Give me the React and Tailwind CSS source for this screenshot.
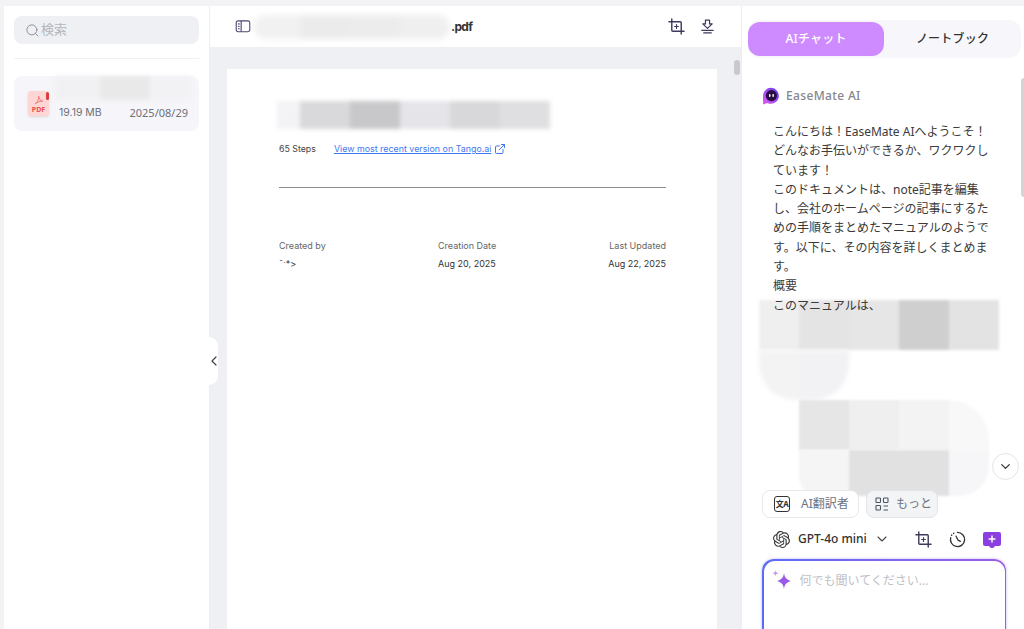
import { ChevronDown, ChevronLeft, Search, ExternalLink, Plus } from 'lucide-react';
import { SiOpenai } from 'react-icons/si';

const ui = { fontFamily: '"Noto Sans", "Noto Sans CJK JP", sans-serif' };
const doc = { fontFamily: 'Inter, "Liberation Sans", sans-serif' };

// pixelated, blurred-out patches over private text
const Mosaic = ({ className, cols, cells }) => (
  <div className={'absolute grid overflow-hidden ' + className} style={{ gridTemplateColumns: cols }}>
    {cells.map((c, i) => (
      <div key={i} className="h-full" style={{ background: c }} />
    ))}
  </div>
);

const CropIcon = ({ className }) => (
  <svg viewBox="0 0 18 18" fill="none" stroke="#3d3a5c" strokeWidth="1.5" strokeLinecap="round" className={className}>
    <path d="M1 4H13a1 1 0 0 1 1 1v12" />
    <path d="M4 1V13a1 1 0 0 0 1 1h12" />
    <path d="M9 7v4M7 9h4" strokeWidth="1.2" />
  </svg>
);

const PanelIcon = () => (
  <svg viewBox="0 0 16 14" fill="none" stroke="#4b4770" strokeWidth="1.2" className="w-4 h-[13px]">
    <rect x="0.7" y="1" width="14.6" height="11.6" rx="2" />
    <path d="M6 1v11.6" />
    <path d="M3 4.2h1M3 6.8h1M3 9.4h1" strokeLinecap="round" />
  </svg>
);

const DownloadIcon = () => (
  <svg viewBox="0 0 16 16" fill="none" stroke="#3d3a5c" strokeWidth="1.3" strokeLinecap="round" strokeLinejoin="round" className="w-[15px] h-[15px]">
    <path d="M5.8 1.2h4.4v4H13L8 10 3 5.2h2.8z" />
    <path d="M2 12.2h12M4 14.8h8" />
  </svg>
);

const PdfIcon = () => (
  <div className="relative w-[21px] h-[25px] mt-[1px] shrink-0 rounded-[3px] bg-[#ffd6d6] shadow-sm flex flex-col items-center justify-end pb-[2px]">
    <svg viewBox="0 0 12 12" fill="none" stroke="#e8605c" strokeWidth="0.9" className="w-2.5 h-2.5 mb-[1px]">
      <path d="M1.5 10.5C4 9 6 5 5.6 1.5 6 5 8 7.5 10.5 7.500 7.500 7.300 4 8 1.500 10.500z" />
    </svg>
    <span className="text-[7px] leading-[8px] font-bold text-[#e8504c]">PDF</span>
    <div className="absolute right-0 top-[1px] w-[3px] h-[8px] rounded-sm bg-[#d9403c]" />
  </div>
);

const Logo = () => (
  <svg viewBox="0 0 18 18" className="w-[18px] h-[18px]">
    <defs>
      <linearGradient id="em" x1="0" y1="1" x2="1" y2="0">
        <stop offset="0" stopColor="#e85cf0" />
        <stop offset="1" stopColor="#5b3df5" />
      </linearGradient>
    </defs>
    <path d="M9 .8a8 8 0 1 1-3.6 15.2L1 17.4V9A8 8 0 0 1 9 .8z" fill="url(#em)" />
    <circle cx="9.400" cy="8.600" r="5.600" fill="#2a0f45" />
    <rect x="7" y="7" width="1.500" height="3" rx=".7" fill="#fff" />
    <rect x="10.400" y="7" width="1.500" height="3" rx=".7" fill="#fff" />
  </svg>
);

const TranslateIcon = () => (
  <div className="w-4 h-4 rounded-[3px] border-[1.5px] border-[#333] flex items-center justify-center text-[8px] leading-none font-bold text-[#333] tracking-[-0.5px]">
    文A
  </div>
);

const MoreIcon = () => (
  <svg viewBox="0 0 14 14" fill="none" stroke="#4b5563" strokeWidth="1.1" className="w-3.5 h-3.5">
    <rect x="1" y="1" width="4.500" height="4.500" rx=".8" />
    <rect x="8.500" y="1" width="4.500" height="4.500" rx=".8" />
    <rect x="1" y="8.500" width="4.500" height="4.500" rx=".8" />
    <path d="M8.500 9h4.500M8.500 13h4.500" />
  </svg>
);

const HistoryIcon = () => (
  <svg viewBox="0 0 18 18" fill="none" stroke="#333" strokeWidth="1.4" strokeLinecap="round" className="w-[17px] h-[17px]">
    <path d="M9 1.500A7.500 7.500 0 1 1 1.800 7" />
    <path d="M2.800 4.400v.01M5 2.500v.01" strokeWidth="1.700" />
    <path d="M7.500 5.500 9.500 9.500 12 11" />
  </svg>
);

const NewChatIcon = () => (
  <div className="relative w-[18px] h-[14px] rounded-[2px] bg-[#8b3fe0] flex items-center justify-center">
    <Plus size={10} strokeWidth={3.5} color="#fff" />
    <div className="absolute left-[6px] -bottom-[2px] w-[6px] h-[3px] bg-[#8b3fe0] rounded-b-sm" />
  </div>
);

const Sparkle = () => (
  <svg viewBox="0 0 20 20" className="w-[20px] h-[20px] shrink-0" fill="#9a5ae8">
    <path d="M12 3c.6 4.600 2.400 6.400 7 8-4.600 1.600-6.400 3.400-7 8-.6-4.600-2.400-6.400-7-8 4.600-1.600 6.400-3.400 7-8z" />
    <path d="M3.500 0c.2 1.900.9 2.700 3 3.200-2.100.5-2.800 1.300-3 3.200-.2-1.900-.9-2.700-3-3.200 2.100-.5 2.800-1.300 3-3.200z" fill="#c79bf2" />
  </svg>
);

const chatLines = [
  'こんにちは！EaseMate AIへようこそ！',
  'どんなお手伝いができるか、ワクワクし',
  'ています！',
  'このドキュメントは、note記事を編集',
  'し、会社のホームページの記事にするた',
  'めの手順をまとめたマニュアルのようで',
  'す。以下に、その内容を詳しくまとめま',
  'す。',
  '概要',
  'このマニュアルは、',
];

const Sidebar = () => (
  <aside className="w-[206px] shrink-0 bg-white border-r border-[#eeeef2] px-2.5 pt-2.5" style={ui}>
    <div className="h-[28px] rounded-lg bg-[#eff0f4] flex items-center gap-px px-[11px] text-[13px] text-[#b4b6bd]">
      <Search size={15} strokeWidth={1.5} color="#888b94" />
      <span>検索</span>
    </div>
    <div className="h-px bg-[#f1f1f4] mt-[14px]" />
    <div className="relative mt-[17px] h-[55px] rounded-lg bg-[#f6f6fa] pl-[14px] pr-[11px] pt-[14px] flex gap-2.5">
      <PdfIcon />
      <div className="flex-1 flex justify-between pt-[15px] text-[11px] leading-4 text-[#6f7078]">
        <span className="text-[10.5px]" style={doc}>19.19 MB</span>
        <span>2025/08/29</span>
      </div>
      <Mosaic
        className="left-[40px] top-0 h-[24px] blur-[2px]"
        cols="46px 50px 42px"
        cells={['#f1f1f4', '#e9e9ea', '#f2f2f5']}
      />
    </div>
  </aside>
);

const Viewer = () => (
  <main className="relative flex-1 min-w-0 flex flex-col">
    <header className="h-[41px] shrink-0 bg-white flex items-center pl-[25px] pr-[26px]">
      <PanelIcon />
      <span className="ml-[200px] mt-[1px] text-[12px] font-bold tracking-[-0.6px] text-[#333]" style={doc}>.pdf</span>
      <div className="ml-auto flex items-center gap-[15px]">
        <CropIcon className="w-[17px] h-[17px]" />
        <DownloadIcon />
      </div>
      <Mosaic
        className="left-[44px] top-[9px] h-[24px] blur-[3px] rounded-xl"
        cols="46px 50px 50px 50px"
        cells={['#f1f1f2', '#ebebeb', '#ececec', '#efefef']}
      />
    </header>
    <div className="flex-1 min-h-0 bg-[#eff0f4] pl-[17px] pr-6 pt-[22px] overflow-hidden">
      <div className="relative h-full bg-white pl-[52px] pr-[51px] pt-[72px] text-[9px] text-[#444]" style={doc}>
        <div className="flex items-center gap-[18px] leading-4">
          <span className="text-[8.8px]">65 Steps</span>
          <span className="flex items-center gap-[3px] text-[#3e78f0]">
            <span className="underline text-[8.9px]">View most recent version on Tango.ai</span>
            <ExternalLink size={12} strokeWidth={2} />
          </span>
        </div>
        <div className="h-px bg-[#8c8c8c] mt-[30px]" />
        <div className="grid grid-cols-[159px_1fr_auto] mt-[50px] leading-4">
          <div>
            <div className="text-[#666]">Created by</div>
            <div className="mt-[2px] text-[#333]">¯ˑ*&gt;</div>
          </div>
          <div>
            <div className="text-[#666]">Creation Date</div>
            <div className="mt-[2px] text-[#333]">Aug 20, 2025</div>
          </div>
          <div className="text-right">
            <div className="text-[#666]">Last Updated</div>
            <div className="mt-[2px] text-[#333]">Aug 22, 2025</div>
          </div>
        </div>
        <Mosaic
          className="left-[50px] top-[32px] h-[28px] blur-[2px]"
          cols="23px 50px 50px 50px 50px 50px"
          cells={['#f3f3f5', '#d9d9dc', '#c8c8cb', '#e5e5e9', '#d8d8db', '#dfdfe2']}
        />
      </div>
    </div>
    <div className="absolute right-[1px] top-[54px] w-1.5 h-[15px] rounded bg-[#c9c9cd]" />
    <button className="absolute -left-px top-[331px] w-[9px] h-[48px] bg-white flex items-center justify-center rounded-r-xl">
      <ChevronLeft size={16} strokeWidth={1.8} color="#444" className="shrink-0" />
    </button>
  </main>
);

const Chat = () => (
  <section className="relative w-[283px] shrink-0 bg-white border-l border-[#eeeef2] flex flex-col overflow-hidden" style={ui}>
    <div className="mt-[14px] ml-[6px] mr-[3px] h-[38px] rounded-xl bg-[#f7f7fb] flex items-center text-[12px] font-medium tracking-[0.2px]">
      <div className="w-[136px] h-[34px] rounded-xl bg-[#cd8bff] text-white flex items-center justify-center">AIチャット</div>
      <div className="flex-1 text-center text-[#333]">ノートブック</div>
    </div>
    <div className="flex items-center gap-[6px] ml-5 mt-[28px] h-[20px] text-[12px] font-medium tracking-[0.35px] text-[#85858c]">
      <Logo />
      <span>EaseMate AI</span>
    </div>
    <div className="relative z-10 flex-1 min-h-0 mt-[16px] pl-[31px] text-[12px] leading-[19.3px] text-[#3a3a3a] overflow-hidden">
      {chatLines.map((line) => (
        <div key={line} className="whitespace-nowrap">{line}</div>
      ))}
    </div>
    <div className="relative z-10 flex items-center gap-[7px] pl-5 h-[28px] text-[12px] text-[#6b7280]">
      <div className="h-[28px] w-[97px] rounded-lg bg-white border border-[#e8e8ec] flex items-center gap-[11px] pl-[11px]">
        <TranslateIcon />
        <span>AI翻訳者</span>
      </div>
      <div className="h-[28px] w-[72px] rounded-lg border border-[#e2e4e9] bg-[#f3f4f6] flex items-center gap-[7px] pl-2">
        <MoreIcon />
        <span>もっと</span>
      </div>
    </div>
    <div className="flex items-center h-[24px] mt-[9px] pl-[31px] pr-[23px]">
      <SiOpenai size={17} color="#333" />
      <span className="ml-2 text-[12px] font-medium text-[#333]">GPT-4o mini</span>
      <ChevronDown size={16} strokeWidth={1.6} color="#444" className="ml-[7px]" />
      <div className="ml-auto flex items-center gap-[17px]">
        <CropIcon className="w-[17px] h-[17px]" />
        <HistoryIcon />
        <NewChatIcon />
      </div>
    </div>
    <div className="mt-[8px] ml-5 mr-[18px] h-[78px] -mb-[8px] rounded-t-[12px] p-[1.5px] bg-gradient-to-r from-[#5a6cf5] to-[#9b5de8] shrink-0 shadow-[0_0_3px_#b9b4f5]">
      <div className="h-full rounded-t-[11px] bg-white flex gap-2 pl-2 pt-[9px] text-[12px] text-[#c0c0c6]">
        <Sparkle />
        <span className="mt-[2px]">何でも聞いてください...</span>
      </div>
    </div>
    <Mosaic
      className="left-[17px] top-[294px] h-[50px] blur-[1.5px]"
      cols="40px 50px 50px 50px 50px"
      cells={['#efefef', '#e4e4e4', '#e6e6e6', '#cfcfcf', '#e3e3e3']}
    />
    <Mosaic
      className="left-[17px] top-[344px] h-[50px] blur-[2px] rounded-bl-[36px] rounded-br-[36px]"
      cols="40px 50px"
      cells={['#f3f3f4', '#f2f2f5']}
    />
    <Mosaic
      className="left-[57px] top-[394px] h-[50px] blur-[1px] rounded-tr-[40px]"
      cols="50px 50px 50px 40px"
      cells={['#e6e6e6', '#efefef', '#f3f3f3', '#f8f8f8']}
    />
    <Mosaic
      className="left-[57px] top-[444px] h-[46px] blur-[1px] rounded-br-[30px] rounded-bl-[20px]"
      cols="50px 50px 50px 40px"
      cells={['#f5f5f5', '#e1e1e1', '#e1e1e1', '#f6f6f8']}
    />
    <button className="absolute z-20 right-[5px] top-[447px] w-[27px] h-[27px] rounded-full bg-white border border-[#e4e4e8] flex items-center justify-center">
      <ChevronDown size={15} strokeWidth={2} color="#333" />
    </button>
    <div className="absolute right-0 top-[72px] w-[3px] h-[119px] rounded-l bg-[#d4d4d6]" />
  </section>
);

export default function App() {
  return (
    <div className="w-[1024px] h-[629px] overflow-hidden bg-[#f3f3f5] pt-1.5 flex flex-col">
      <div className="flex-1 min-h-0 flex pl-1">
        <Sidebar />
        <Viewer />
        <Chat />
      </div>
    </div>
  );
}
